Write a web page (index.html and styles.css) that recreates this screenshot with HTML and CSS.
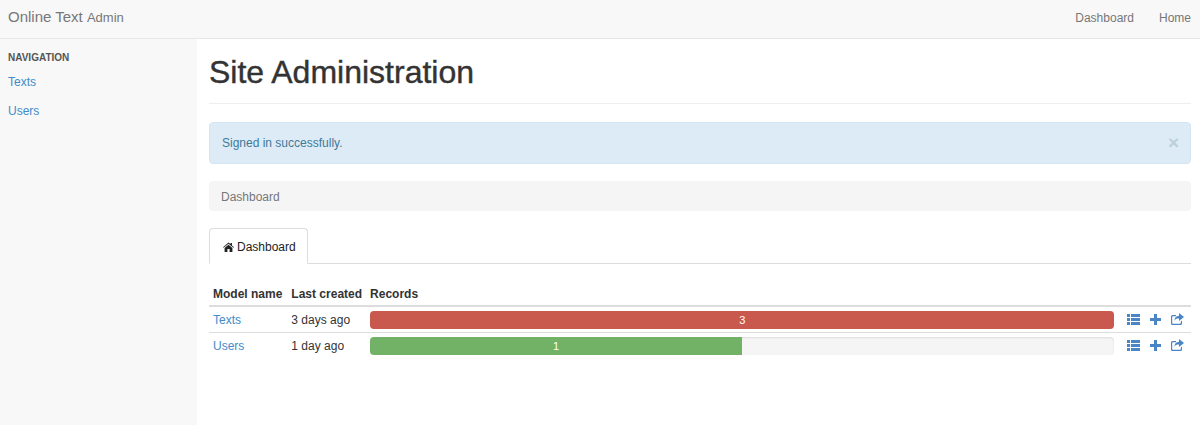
FILE: index.html
```html
<!DOCTYPE html>
<html lang="en">
<head>
    <meta charset="UTF-8">
    <title>Site Administration</title>
    <link rel="stylesheet" href="styles.css">
</head>
<body>
    <nav class="navbar">
        <a class="brand" href="#">Online Text <small>Admin</small></a>
        <div class="nav-links">
            <a href="#">Dashboard</a>
            <a href="#">Home</a>
        </div>
    </nav>
    <div class="wrap">
        <aside class="sidebar">
            <h5>NAVIGATION</h5>
            <a href="#">Texts</a>
            <a href="#">Users</a>
        </aside>
        <main class="content">
            <h1>Site Administration</h1>
            <div class="alert">
                <span>Signed in successfully.</span>
                <span class="close">&times;</span>
            </div>
            <div class="breadcrumb">Dashboard</div>
            <div class="tabs">
                <div class="tab">
                    <svg class="home" viewBox="0 0 12 11"><path d="M6 .6 0 5.7l.6.7L6 1.9l5.4 4.5.6-.7-2.2-1.9V1H8.300v1.300zM1.700 6.500V11h3.100V7.700h2.400V11h3.100V6.500L6 2.900z"/></svg>
                    Dashboard
                </div>
            </div>
            <table>
                <thead>
                    <tr><th>Model name</th><th>Last created</th><th>Records</th><th></th></tr>
                </thead>
                <tbody>
                    <tr>
                        <td><a href="#">Texts</a></td>
                        <td>3 days ago</td>
                        <td class="bar-cell"><div class="progress"><div class="bar red" style="width: 100%">3</div></div></td>
                        <td class="actions">
                            <svg viewBox="0 0 13 11"><path d="M0 0h3v3H0zM4 0h9v3H4zM0 4h3v3H0zM4 4h9v3H4zM0 8h3v3H0zM4 8h9v3H4z"/></svg>
                            <svg class="plus" viewBox="0 0 11 11"><path d="M4 0h3v4h4v3H7v4H4V7H0V4h4z"/></svg>
                            <svg class="share" viewBox="0 0 13 12"><path d="M8 0l5 4-5 4V5.500C5.500 5.500 4 6 3.500 8 3.300 5 5 3 8 2.800z"/><path d="M1.500 2H5v1.200H2a.8.800 0 0 0-.8.800v6a.8.800 0 0 0 .8.800h7a.8.800 0 0 0 .8-.800V8.500L11 7.500V10.500A1.500 1.500 0 0 1 9.500 12h-8A1.500 1.500 0 0 1 0 10.500v-7A1.500 1.500 0 0 1 1.500 2z"/></svg>
                        </td>
                    </tr>
                    <tr>
                        <td><a href="#">Users</a></td>
                        <td>1 day ago</td>
                        <td class="bar-cell"><div class="progress"><div class="bar green" style="width: 50%">1</div></div></td>
                        <td class="actions">
                            <svg viewBox="0 0 13 11"><path d="M0 0h3v3H0zM4 0h9v3H4zM0 4h3v3H0zM4 4h9v3H4zM0 8h3v3H0zM4 8h9v3H4z"/></svg>
                            <svg class="plus" viewBox="0 0 11 11"><path d="M4 0h3v4h4v3H7v4H4V7H0V4h4z"/></svg>
                            <svg class="share" viewBox="0 0 13 12"><path d="M8 0l5 4-5 4V5.500C5.500 5.500 4 6 3.500 8 3.300 5 5 3 8 2.800z"/><path d="M1.500 2H5v1.200H2a.8.800 0 0 0-.8.800v6a.8.800 0 0 0 .8.800h7a.8.800 0 0 0 .8-.800V8.500L11 7.500V10.500A1.500 1.500 0 0 1 9.500 12h-8A1.500 1.500 0 0 1 0 10.500v-7A1.500 1.500 0 0 1 1.500 2z"/></svg>
                        </td>
                    </tr>
                </tbody>
            </table>
        </main>
    </div>
</body>
</html>
```

FILE: styles.css
```css
*{
    margin: 0;
    padding: 0;
    box-sizing: border-box;
}
body{
    font-family: "Liberation Sans", Arial, sans-serif;
    font-size: 12px;
    line-height: 18px;
    color: #333;
    background-color: #fff;
}
a{
    color: #428bca;
    text-decoration: none;
}
.navbar{
    height: 39px;
    display: flex;
    justify-content: space-between;
    align-items: center;
    padding: 0 9px 3px 8px;
    background-color: #f8f8f8;
    border-bottom: 1px solid #e7e7e7;
}
.brand{
    font-size: 15px;
    color: #777;
}
.brand small{
    font-size: 13px;
}
.nav-links{
    display: flex;
    gap: 25px;
}
.nav-links a{
    color: #777;
}
.wrap{
    display: flex;
    height: 386px;
}
.sidebar{
    width: 197px;
    flex-shrink: 0;
    padding: 10px 8px;
    background-color: #f8f8f8;
}
.sidebar h5{
    font-size: 10px;
    line-height: 18px;
    color: #555;
    margin-bottom: 6px;
}
.sidebar a{
    display: block;
    height: 29px;
    line-height: 18px;
}
.content{
    flex: 1;
    padding: 0 9px 0 12px;
}
h1{
    font-size: 32px;
    font-weight: normal;
    -webkit-text-stroke: 0.4px #333;
    line-height: 40px;
    padding: 13px 0 11px;
    height: 65px;
    border-bottom: 1px solid #eee;
    margin-bottom: 18px;
}
.alert{
    height: 42px;
    display: flex;
    justify-content: space-between;
    align-items: center;
    padding: 0 11px 0 12px;
    color: #3f7a9b;
    background-color: #dcebf5;
    border: 1px solid #d3e6f2;
    border-radius: 4px;
    margin-bottom: 17px;
}
.close{
    font-size: 19px;
    font-weight: bold;
    color: #bccfdc;
}
.breadcrumb{
    height: 30px;
    line-height: 30px;
    padding: 1px 12px 0;
    color: #777;
    background-color: #f5f5f5;
    border-radius: 4px;
    margin-bottom: 17px;
}
.tabs{
    height: 36px;
    border-bottom: 1px solid #ddd;
    margin-bottom: 18px;
}
.tab{
    width: 99px;
    height: 36px;
    display: flex;
    align-items: center;
    gap: 3px;
    padding: 1px 0 0 13px;
    color: #222;
    background-color: #fff;
    border: 1px solid #ddd;
    border-bottom-color: #fff;
    border-radius: 4px 4px 0 0;
}
.home{
    width: 11px;
    height: 10px;
    fill: #222;
}
table{
    width: 100%;
    border-collapse: collapse;
}
th{
    text-align: left;
    font-weight: bold;
    height: 24px;
    padding: 0 4px;
    white-space: nowrap;
    border-bottom: 2px solid #ddd;
}
th:first-child{
    padding-right: 5px;
}
td{
    height: 26px;
    padding: 1px 4px 0;
    white-space: nowrap;
    border-bottom: 1px solid #ddd;
}
tbody tr:last-child td{
    border-bottom: none;
}
.bar-cell{
    width: 100%;
}
.progress{
    height: 18px;
    background-color: #f5f5f5;
    border-radius: 4px;
    box-shadow: inset 0 1px 2px rgba(0,0,0,0.1);
    overflow: hidden;
}
.bar{
    height: 18px;
    line-height: 18px;
    font-size: 11px;
    color: #fff;
    text-align: center;
}
.red{
    background-color: #c9584f;
}
.green{
    background-color: #72b267;
}
.actions{
    padding: 1px 0 0 9px;
}
.actions svg{
    height: 11px;
    width: 13px;
    fill: #4a86c5;
    margin-right: 6px;
    vertical-align: -1px;
}
.actions .plus{
    width: 11px;
    margin-right: 7px;
}
.actions .share{
    height: 12px;
    margin-right: 7px;
}
```
